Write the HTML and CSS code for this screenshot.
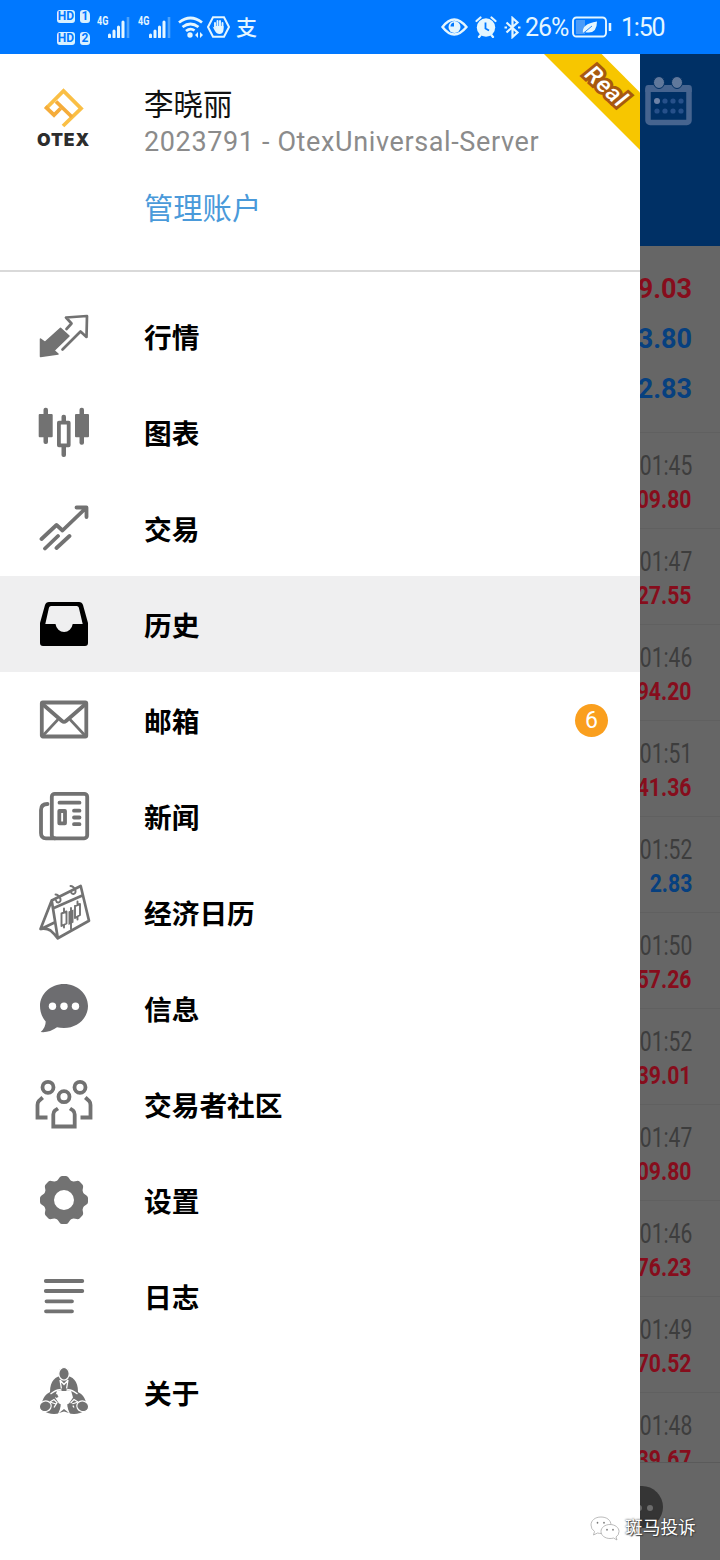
FILE: index.html
```html
<!DOCTYPE html>
<html lang="zh-CN">
<head>
<meta charset="utf-8">
<title>OTEX</title>
<link rel="stylesheet" href="styles.css">
</head>
<body>
<div class="phone">
  <header class="status">
    <div class="hd-col">
      <div class="hd-row"><span class="hd">HD</span><span class="sim">1</span></div>
      <div class="hd-row"><span class="hd">HD</span><span class="sim">2</span></div>
    </div>
    <div class="signal"><span class="net">4G</span>
      <svg width="22" height="22" viewBox="0 0 22 22"><path d="M1.500 21v-2M6 21v-6M10.500 21v-10M15 21V6" stroke="#e4f6ff" stroke-width="3" stroke-linecap="round"/><path d="M20 22V1" stroke="#4ba2fc" stroke-width="2.600"/></svg>
    </div>
    <div class="signal"><span class="net">4G</span>
      <svg width="22" height="22" viewBox="0 0 22 22"><path d="M1.500 21v-2M6 21v-6M10.500 21v-10M15 21V6" stroke="#e4f6ff" stroke-width="3" stroke-linecap="round"/><path d="M20 22V1" stroke="#4ba2fc" stroke-width="2.600"/></svg>
    </div>
    <svg class="wifi" width="26" height="22" viewBox="0 0 26 22" fill="none" stroke="#e4f6ff" stroke-width="2.800"><path d="M1 6.500q11.500-9 23 0M4.500 11q8-6 16 0M8 15q4.500-3.500 8.500-.5"/><circle cx="12" cy="19" r="1.300" fill="#e4f6ff"/><path d="M17 19l3-3v6zM25 19l-3-3v6z" fill="#e4f6ff" stroke="none"/></svg>
    <svg class="hex" width="23" height="22" viewBox="0 0 23 22" fill="none"><path d="M6 1.200h11L22 11l-5 9.800H6L1 11z" stroke="#e4f6ff" stroke-width="2"/><path d="M8 12V7M10.500 11V5M13 11V5M15.500 12V7" stroke="#e4f6ff" stroke-width="1.900" stroke-linecap="round"/><path d="M5.500 10.500l3 2V10h8v4q-.5 4-4 4-3 0-4.500-3z" fill="#e4f6ff"/></svg>
    <span class="zhi">支</span>
    <div class="status-right">
      <svg class="eye" width="27" height="20" viewBox="0 0 27 20"><path d="M1.500 10Q13 -5 25.500 10Q13 25 1.500 10z" fill="none" stroke="#e4f6ff" stroke-width="2.400"/><circle cx="13.500" cy="10" r="6" fill="#e4f6ff"/><path d="M13 5.500v4H9.500a4 4 0 0 1 3.500-4z" fill="#0078ff"/></svg>
      <svg class="alarm" width="22" height="22" viewBox="0 0 22 22"><circle cx="11" cy="11.500" r="9.200" fill="#e4f6ff"/><path d="M1.500 5L5.500 1.500M20.500 5l-4-3.500M4 21l2-2.500M18 21l-2-2.500" stroke="#e4f6ff" stroke-width="2.200" stroke-linecap="round"/><path d="M10.500 6.500v6l3.500 2" fill="none" stroke="#0078ff" stroke-width="1.800"/></svg>
      <svg class="bt" width="17" height="23" viewBox="0 0 17 23" fill="none" stroke="#e4f6ff" stroke-width="2.200"><path d="M2.500 6.500l11 10-5 4.500V2l5 4.500-11 10"/><path d="M.5 11.500H3M14 11.500h2.500"/></svg>
      <span class="pct">26%</span>
      <svg class="batt" width="40" height="22" viewBox="0 0 40 22"><rect x="1" y="1.500" width="33" height="19" rx="3.500" fill="none" stroke="#e4f6ff" stroke-width="1.900"/><path d="M4 4h9v14H4z" fill="#4b9cf8"/><path d="M38 7v8" stroke="#e4f6ff" stroke-width="2.500"/><path d="M11 17.500Q9 8 25 5.500Q25 19 12.500 16z" fill="#e4f6ff"/><path d="M11 17.500l9-7.500" stroke="#2288ff"/></svg>
      <span class="clock">1:50</span>
    </div>
  </header>

  <div class="body">
    <aside class="drawer">
      <section class="account">
        <div class="logo">
          <svg width="42" height="42" viewBox="0 0 42 42" fill="none" stroke-width="3.800"><path d="M3.500 21L20.500 4 38 21.500 20 39" stroke="#fabf45"/><path d="M2.200 19.700l8.800 8.300 6.500-6.500M13 14.500L29 30" stroke="#f5ac3a"/></svg>
          <span class="brand">OTEX</span>
        </div>
        <div class="who">
          <div class="name">李晓丽</div>
          <div class="server">2023791 - OtexUniversal-Server</div>
          <div class="manage">管理账户</div>
        </div>
        <div class="ribbon"><span>Real</span></div>
      </section>

      <nav class="menu">
        <div class="item"><svg class="ico" viewBox="0 0 64 64"><path d="M28.500 24.300L37 32 22 46.500l4 3.500-17.500 2.500V35l4.500 3.300z" fill="#727272" stroke="#727272" stroke-width="1.500" stroke-linejoin="round"/><path class="s2" d="M34.500 25l5-5.500-5.500-6 21-1.500-.5 21-6-5.500L30.500 45.500"/></svg><span>行情</span></div>
        <div class="item"><svg class="ico" viewBox="0 0 64 64"><g fill="#727272"><rect x="6.700" y="14" width="14" height="23.300" rx="1"/><rect x="11.500" y="7.700" width="4.500" height="36.300" rx="2"/><rect x="43" y="14" width="14" height="23.300" rx="1"/><rect x="47.500" y="7.700" width="4.500" height="37" rx="2"/><rect x="29.500" y="14.700" width="4.500" height="8" rx="2"/><rect x="29.500" y="45" width="4.500" height="12" rx="2"/></g><rect class="s" x="26.900" y="22.700" width="9.800" height="22.600" stroke-width="4"/></svg><span>图表</span></div>
        <div class="item"><svg class="ico" viewBox="0 0 64 64"><path class="s" d="M9.500 43L24.500 29l6 5.500L54 12M44.500 11.500h10V21M13 52.500L26 40M24.500 52L37.500 40"/></svg><span>交易</span></div>
        <div class="item active"><svg class="ico" viewBox="0 0 64 64"><path fill-rule="evenodd" d="M17 10h30q3 0 4 3l5 18v20q0 3-3 3H11q-3 0-3-3V31l5-18q1-3 4-3zM19 14q-1.500 0-2 1.500L13.300 32H23.500a8.700 9.500 0 0 0 17.200 0H50.700L46.800 15.500q-.5-1.500-2-1.500z"/></svg><span>历史</span></div>
        <div class="item"><svg class="ico" viewBox="0 0 64 64"><rect class="s" x="9.800" y="14.500" width="44.500" height="34" rx="1"/><path class="s" d="M11 16.500l19 16.500q2 1.500 4 0L53 16.500"/><path class="s2" d="M11 47.500L25.500 32M53 47.500L38.500 32"/></svg><span>邮箱</span><b class="badge">6</b></div>
        <div class="item"><svg class="ico" viewBox="0 0 64 64"><rect class="s" x="19.800" y="9.800" width="35.400" height="44.500" rx="3"/><path class="s" d="M15.500 20Q9 20 9 26v23q0 5.300 5 5.300h9M27.500 18.700h20M42 26.700h5.500M42 33.500h5.500M42 40.200h5.500"/><rect class="s" x="27.300" y="27" width="5.700" height="12.300"/></svg><span>新闻</span></div>
        <div class="item"><svg class="ico" viewBox="0 0 64 64"><path class="s2" d="M19.700 20.500L48.700 6 57 40.700 25.800 58.300zM21.300 28.300L50.300 15.500M19.700 20.500L8.500 49q6-1 10 1.500 3.500 3 7.300 7.800M9 49l12.500-6"/><path class="s1" d="M23.500 14.500q3 0 5 4.500 .5 3-2 3.500-2 .3-2.500-2M38.500 6q3 0 5 4.500 .5 3-2 3.500-2 .3-2.500-2" stroke-width="2"/><path class="s1" d="M29.500 33.500l5-2v12l-5 2.500zM32 32v-3.500M32 45v2.500M43 26l5-2v11l-5 3zM45.500 25v-3.500M45.500 37v2.500M39 28v21"/><path d="M36.500 31.500l5-2v13l-5 2.500z" fill="#727272"/></svg><span>经济日历</span></div>
        <div class="item"><svg class="ico" viewBox="0 0 64 64"><path d="M32 8c13.300 0 24 9.800 24 22S45.300 52 32 52q-4 0-7-.7Q17 57 8.700 56q5-4.500 5-10.500Q8 39 8 30C8 17.800 18.700 8 32 8z" fill="#6d6d70"/><g fill="#fff"><circle cx="20.500" cy="30.300" r="3.700"/><circle cx="32" cy="30.300" r="3.700"/><circle cx="43.500" cy="30.300" r="3.700"/></g></svg><span>信息</span></div>
        <div class="item"><svg class="ico" viewBox="0 0 64 64"><g class="s"><circle cx="16" cy="15.300" r="5.500"/><circle cx="48" cy="15.300" r="5.500"/><circle cx="32" cy="24.700" r="5.500"/></g><path class="s square" d="M10.700 25.500L6.800 29q-1.300 1.500-1.300 4v12.500h10M53.300 25.500L57.200 29q1.300 1.500 1.300 4v12.500h-10M26 36.500l-3 2q-1.700 1.500-1.700 4v12h21.400v-12q0-2.500-1.700-4l-3-2"/></svg><span>交易者社区</span></div>
        <div class="item"><svg class="ico" viewBox="0 0 64 64"><circle cx="32" cy="32" r="15.300" fill="none" stroke="#727272" stroke-width="10.600"/><path id="cogs" d="M24 14.500L27.500 9.500Q28.500 8 30 8h4q1.500 0 2.500 1.500L40 14.500zM24 49.500l3.500 5Q28.500 56 30 56h4q1.500 0 2.500-1.500L40 49.500zM14.500 24l-5 3.500Q8 28.500 8 30v4q0 1.500 1.500 2.500l5 3.500zM49.500 24l5 3.500Q56 28.500 56 30v4q0 1.500-1.500 2.500l-5 3.500z" fill="#727272"/><use href="#cogs" transform="rotate(45 32 32)"/></svg><span>设置</span></div>
        <div class="item"><svg class="ico" viewBox="0 0 64 64"><path class="s" d="M13.800 17h36.500M13.800 27h36.500M14.500 37.300h25.500M14 47.300h26"/></svg><span>日志</span></div>
        <div class="item"><svg class="ico" viewBox="0 0 64 64"><path d="M18 32Q18 16 32 15.500 46 16 46 32L40 36H24z" fill="#727272"/><path d="M20 31q8 0 9 10l-1 12q-9 3-18-3-2-14 10-19zM44 31q-8 0-9 10l1 12q9 3 18-3 2-14-10-19z" fill="#727272"/><path d="M25 30.500h14l2 7-4 6-5 2-5-2-4-6zM30 44h4l4 10H26z" fill="#fff"/><path d="M28 20l4 4.500 4-4.500M28 20l1.500 9M36 20l-1.500 9M18.500 34q8-6 12-3.500M45.500 34q-8-6-12-3.500M18 42l4-2.500 3 3-3 5M46 42l-4-2.500-3 3 3 5M18 42l6 2M46 42l-6 2" fill="none" stroke="#fff" stroke-width="1.300"/><path d="M29.500 28h5v3h-5zM22 35l3-1 1.500 3-2.500 1zM37 45l2.500-2 2 2-2.500 2z" fill="#727272"/><path d="M27 53l5-4 5 4-5-1.500z" fill="#727272"/><g fill="#727272" stroke="#fff" stroke-width="1.200"><ellipse cx="32" cy="13.800" rx="5.200" ry="6.300"/><ellipse cx="13.300" cy="46.300" rx="6" ry="5.300" transform="rotate(-20 13.300 46.300)"/><ellipse cx="50.700" cy="46.300" rx="6" ry="5.300" transform="rotate(20 50.700 46.300)"/></g></svg><span>关于</span></div>
      </nav>
    </aside>

    <main class="behind">
      <div class="appbar">
        <svg width="48" height="50" viewBox="0 0 48 50"><rect x="3" y="12" width="41" height="34.500" rx="2" fill="none" stroke="#46648f" stroke-width="5.500"/><path d="M.300 12q0-3 3-3h40.500q3 0 3 3v4H.300z" fill="#46648f"/><ellipse cx="14" cy="6.500" rx="5.500" ry="6" fill="#60789b" stroke="#002f63"/><ellipse cx="32" cy="6.500" rx="5.500" ry="6" fill="#60789b" stroke="#002f63"/><g fill="#26508a"><circle cx="20" cy="25" r="2.600"/><circle cx="28" cy="25" r="2.600"/><circle cx="36" cy="25" r="2.600"/><circle cx="12" cy="35" r="2.600"/><circle cx="20" cy="35" r="2.600"/><circle cx="28" cy="35" r="2.600"/><circle cx="36" cy="35" r="2.600"/></g><circle cx="12" cy="25" r="3" fill="#6d82a6"/></svg>
      </div>
      <div class="totals"><p class="red">9.03</p><p class="blue">3.80</p><p class="blue">2.83</p></div>
      <div class="deals">
        <div class="deal"><i>01:45</i><b class="red">09.80</b></div>
        <div class="deal"><i>01:47</i><b class="red">27.55</b></div>
        <div class="deal"><i>01:46</i><b class="red">94.20</b></div>
        <div class="deal"><i>01:51</i><b class="red">41.36</b></div>
        <div class="deal"><i>01:52</i><b class="blue">2.83</b></div>
        <div class="deal"><i>01:50</i><b class="red">57.26</b></div>
        <div class="deal"><i>01:52</i><b class="red">39.01</b></div>
        <div class="deal"><i>01:47</i><b class="red">09.80</b></div>
        <div class="deal"><i>01:46</i><b class="red">76.23</b></div>
        <div class="deal"><i>01:49</i><b class="red">70.52</b></div>
        <div class="deal"><i>01:48</i><b class="red">39.67</b></div>
      </div>
      <div class="tabbar"><svg width="24" height="44" viewBox="0 0 24 44"><circle cx="2" cy="22" r="21" fill="#353535"/><circle cx="10" cy="23" r="3" fill="#6b6b6b"/><circle cx="-1" cy="23" r="3" fill="#6b6b6b"/></svg></div>
    </main>
  </div>

  <div class="watermark">
    <svg width="30" height="25" viewBox="0 0 30 25" fill="#fff" stroke="#aaa" stroke-width=".8"><path d="M11 1C5 1 1 4.500 1 9q0 4 3.500 6.500L3.500 19l4-2q2 .5 4 .5C17 17.500 21 14 21 9S16.500 1 11 1z"/><path d="M20 8.500c-5 0-9 3-9 7s4 7 9 7q2 0 3.500-.5l3.500 2-1-3q3-2 3-5.500c0-4-4-7-9-7z"/><path d="M7.500 6.500v.5M14 6.500v.5M17 13.500v.5M23 13.500v.5" stroke="#777" stroke-width="1.600" stroke-linecap="round"/></svg>
    <span>斑马投诉</span>
  </div>
</div>
</body>
</html>
```
FILE: styles.css
```css
* { box-sizing: border-box; }
body { margin: 0; font-family: Roboto, "Noto Sans CJK SC", sans-serif; background: #fff; }
.phone { position: relative; width: 720px; height: 1560px; overflow: hidden; display: flex; flex-direction: column; }

/* status bar */
.status { height: 54px; flex: none; background: #0078ff; color: #e4f6ff; display: flex; align-items: center; padding-left: 57px; }
.status svg { display: block; flex: none; }
.hd-col { display: flex; flex-direction: column; gap: 9px; width: 40px; }
.hd-row { display: flex; gap: 5px; height: 13px; }
.hd, .sim { background: #d9f1ff; color: #0078ff; border-radius: 3px; font-weight: 700; font-size: 12px; line-height: 13.500px; text-align: center; }
.hd { width: 18px; }
.sim { width: 10px; border-top-right-radius: 5px; }
.signal { display: flex; width: 41px; height: 22px; }
.net { width: 11px; font-size: 12px; line-height: 11px; font-weight: 700; transform: scaleX(.75); transform-origin: left; white-space: nowrap; }
.wifi { margin-left: -1px; }
.hex { margin-left: 3px; }
.zhi { font-size: 21px; line-height: 24px; font-weight: 500; margin-left: 6px; padding-top: 2px; }
.status-right { margin-left: auto; width: 279px; display: flex; align-items: center; }
.alarm { margin-left: 7px; }
.bt { margin-left: 7px; }
.pct, .clock { font-size: 25px; line-height: 30px; white-space: nowrap; padding-top: 2px; }
.pct { width: 46px; margin-left: 4px; letter-spacing: -1px; }
.clock { margin-left: 9px; letter-spacing: -1.200px; }
.batt { margin-left: 1px; }

.body { flex: 1; min-height: 0; display: flex; }

/* drawer */
.drawer { width: 640px; background: #fff; flex: none; }
.account { position: relative; height: 218px; border-bottom: 2px solid #d9d9d9; display: flex; overflow: hidden; }
.logo { width: 144px; flex: none; padding: 33px 0 0 37px; }
.logo svg { display: block; margin-left: 6px; }
.brand { display: block; width: 54px; font: 900 17.500px/20px Inter, sans-serif; color: #2d2d2d; letter-spacing: .9px; margin-top: 1px; }
.name { margin-top: 33px; font-size: 29.500px; line-height: 36px; color: #111; }
.server { font-size: 27px; line-height: 36px; margin-top: 1px; color: #8b8b8b; letter-spacing: .63px; white-space: nowrap; }
.manage { font-size: 29.300px; line-height: 36px; margin-top: 31px; color: #4a9ada; }
.ribbon { position: absolute; top: 0; right: 0; width: 96px; height: 96px; background: #f7c600; clip-path: polygon(0 0, 60% 0, 100% 40%, 100% 100%); }
.ribbon span { position: absolute; left: 32px; top: 18px; width: 60px; line-height: 30px; text-align: center; font-size: 23px; font-weight: 500; letter-spacing: .8px; color: #fff; transform: rotate(43deg) skewX(-8deg); -webkit-text-stroke: 6px #a8590f; paint-order: stroke fill; stroke-linejoin: round; }

.menu { padding-top: 16px; }
.item { height: 96px; display: flex; align-items: center; padding: 0 32px; font-size: 27.700px; font-weight: 700; color: #000; }
.item > span { margin-left: 48px; line-height: 40px; padding-top: 5px; }
.active { background: #efeff0; }
.ico { width: 64px; height: 64px; flex: none; overflow: visible; }
.s, .s1, .s2 { fill: none; stroke: #727272; stroke-width: 3.800; stroke-linecap: round; stroke-linejoin: round; }
.s2 { stroke-width: 2.700; }
.s1 { stroke-width: 1.900; }
.square { stroke-linecap: butt; stroke-linejoin: miter; }
.badge { margin-left: auto; width: 33px; height: 33px; border-radius: 50%; background: #fa9f1e; color: #fff; font-weight: 400; font-size: 23px; line-height: 34px; text-align: center; }

/* dimmed history screen */
.behind { width: 80px; overflow: hidden; background: #666; display: flex; flex-direction: column; }
.appbar { height: 192px; flex: none; background: #003065; padding: 22px 0 0 5px; }
.totals { height: 187px; flex: none; padding: 18px 28px 0 0; border-bottom: 1px solid #606060; display: flex; flex-direction: column; align-items: flex-end; }
.totals p { margin: 0; height: 50px; line-height: 50px; font-size: 27px; font-weight: 700; }
.deals { flex: 1; min-height: 0; overflow: hidden; }
.deal { height: 96px; padding: 15px 28px 0 0; border-bottom: 1px solid #606060; display: flex; flex-direction: column; align-items: flex-end; }
.deal i, .deal b { line-height: 34px; height: 34px; transform-origin: right; white-space: nowrap; }
.deal i { font-style: normal; font-size: 27px; line-height: 36px; color: #3d3d3d; transform: scaleX(.78); }
.deal b { font-size: 26.500px; transform: scaleX(.8); }
.red { color: #860d1c; }
.blue { color: #07407f; }
.tabbar { height: 98px; flex: none; border-top: 1px solid #5a5a5a; padding-top: 22px; }

.watermark { position: absolute; left: 590px; top: 1514px; display: flex; align-items: center; gap: 5px; font-size: 17.700px; line-height: 28px; color: #fff; text-shadow: 0 0 2px #222, 1px 1px 1px #444; }
```
